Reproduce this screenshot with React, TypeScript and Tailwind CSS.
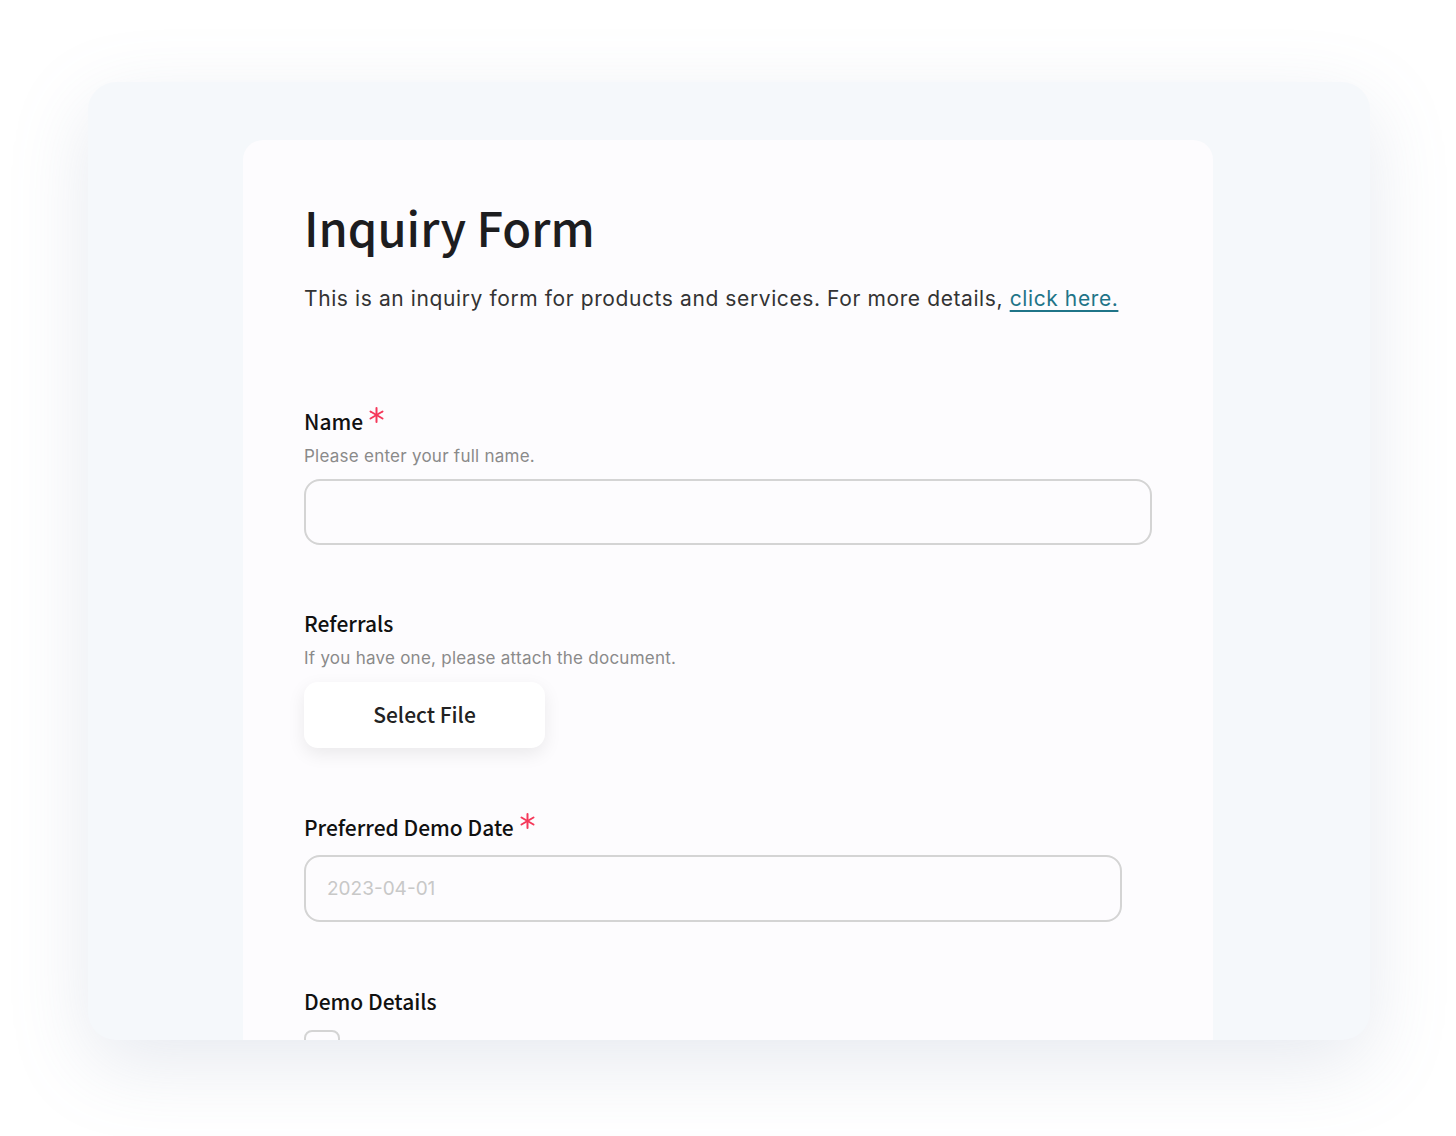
import { useState } from "react";

const sans = "font-['Noto_Sans_CJK_JP','Noto_Sans',sans-serif]";

function Asterisk() {
  return (
    <svg width="15" height="16" viewBox="0 0 15 16" className="mt-[1px]">
      <g stroke="#f5385a" strokeWidth="2" strokeLinecap="round">
        <line x1="7.5" y1="1" x2="7.5" y2="15" />
        <line x1="1.5" y1="4.5" x2="13.5" y2="11.5" />
        <line x1="1.5" y1="11.5" x2="13.5" y2="4.5" />
      </g>
    </svg>
  );
}

function Label({ text, required }: { text: string; required?: boolean }) {
  return (
    <div className="flex items-start gap-[6px]">
      <span className="text-[21px] leading-[30px] font-medium text-[#111]">{text}</span>
      {required && <Asterisk />}
    </div>
  );
}

function Help({ text }: { text: string }) {
  return (
    <p className="mt-[9px] text-[17px] leading-[22px] tracking-[0.25px] text-[#8a8a8a] font-['Inter',sans-serif]">
      {text}
    </p>
  );
}

export default function App() {
  const [name, setName] = useState("");
  const [date, setDate] = useState("");

  return (
    <div className={`h-[1136px] w-full bg-white overflow-hidden ${sans}`}>
      <div className="ml-[88px] mt-[82px] h-[958px] w-[1282px] overflow-hidden rounded-[28px] bg-[#f5f8fb] shadow-[0_24px_80px_rgba(120,140,170,0.18)]">
        <div className="ml-[155px] mt-[58px] w-[970px] min-h-[960px] rounded-t-[20px] bg-[#fdfcfe] px-[61px] pt-[55px]">
          <h1 className="text-[47px] leading-[64px] font-medium text-[#1d1d1f]">
            Inquiry Form
          </h1>
          <p className="mt-[24px] text-[21px] leading-[32px] tracking-[0.6px] text-[#333] font-['Inter',sans-serif]">
            This is an inquiry form for products and services. For more details,{" "}
            <a href="#" className="text-[#1f7488] underline underline-offset-[4px]">
              click here.
            </a>
          </p>

          <div className="mt-[91px]">
            <Label text="Name" required />
            <Help text="Please enter your full name." />
            <input
              value={name}
              onChange={(e) => setName(e.target.value)}
              className="mt-[12px] h-[66px] w-[848px] rounded-[16px] border-2 border-[#d4d4d4] bg-[#fdfcfe] px-[22px] text-[20px] outline-none"
            />
          </div>

          <div className="mt-[63px]">
            <Label text="Referrals" />
            <Help text="If you have one, please attach the document." />
            <button className="mt-[13px] h-[66px] w-[241px] rounded-[14px] bg-white text-[21px] font-medium text-[#222] shadow-[0_6px_18px_rgba(0,0,0,0.08)]">
              Select File
            </button>
          </div>

          <div className="mt-[64px]">
            <Label text="Preferred Demo Date" required />
            <input
              value={date}
              onChange={(e) => setDate(e.target.value)}
              placeholder="2023-04-01"
              className="mt-[13px] h-[67px] w-[818px] rounded-[16px] border-2 border-[#d4d4d4] bg-[#fdfcfe] px-[21px] text-[19px] font-['Inter',sans-serif] outline-none placeholder:text-[#c8c8c8]"
            />
          </div>

          <div className="mt-[64px]">
            <Label text="Demo Details" />
            <div className="mt-[14px] h-[36px] w-[36px] rounded-[8px] border-2 border-[#d4d4d4]" />
          </div>
        </div>
      </div>
    </div>
  );
}
